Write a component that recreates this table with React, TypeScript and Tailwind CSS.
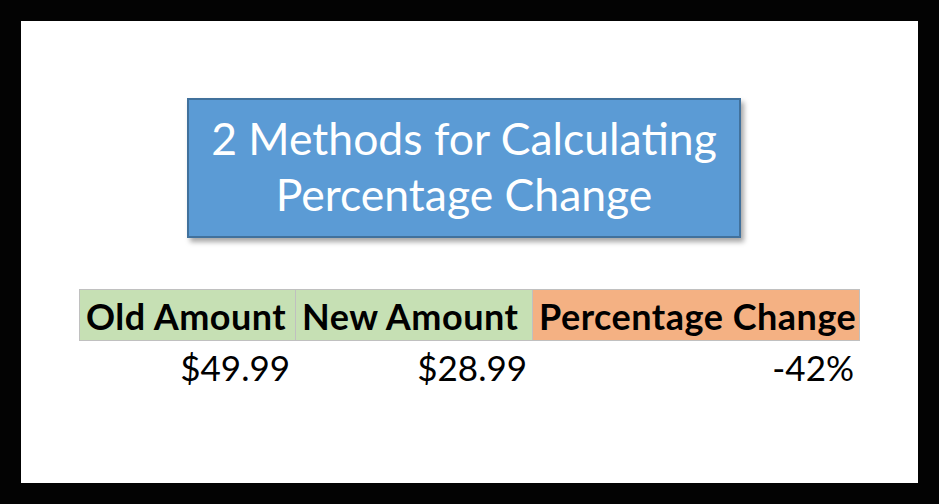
const rows = [
  { label: "Old Amount", value: "$49.99", width: "w-[217px]", bg: "bg-[#c6e0b4]", edge: "" },
  { label: "New Amount", value: "$28.99", width: "w-[237px]", bg: "bg-[#c6e0b4]", edge: "border-l-0" },
  { label: "Percentage Change", value: "-42%", width: "w-[327px]", bg: "bg-[#f4b183]", edge: "border-l-0" },
];

export default function App() {
  return (
    <div className="h-[504px] w-[939px] bg-[#030303] p-[21px] font-['Lato','Open_Sans',sans-serif]">
      <div className="h-[462px] w-[897px] bg-white pt-[77px]">
        <div className="ml-[166px] flex h-[140px] w-[554px] flex-col items-center justify-center border-2 border-[#41719c] bg-[#5b9bd5] pb-[4px] shadow-[3px_4px_5px_rgba(0,0,0,0.35)]">
          <p className="text-[44.5px] leading-[56px] text-white">2 Methods for Calculating</p>
          <p className="text-[44.5px] leading-[56px] text-white">Percentage Change</p>
        </div>

        <div className="ml-[58px] mt-[51px] flex">
          {rows.map((r) => (
            <div key={r.label} className={r.width}>
              <div
                className={`flex h-[52px] items-center justify-start border border-[#c0c0c0] pl-[6px] pt-[2px] ${r.bg} ${r.edge}`}
              >
                <span className="whitespace-nowrap text-[36px] font-bold tracking-[0.5px] text-black">{r.label}</span>
              </div>
              <div className="flex h-[48px] items-center justify-end pr-[6px] pt-[4px]">
                <span className="text-[35px] text-black">{r.value}</span>
              </div>
            </div>
          ))}
        </div>
      </div>
    </div>
  );
}
